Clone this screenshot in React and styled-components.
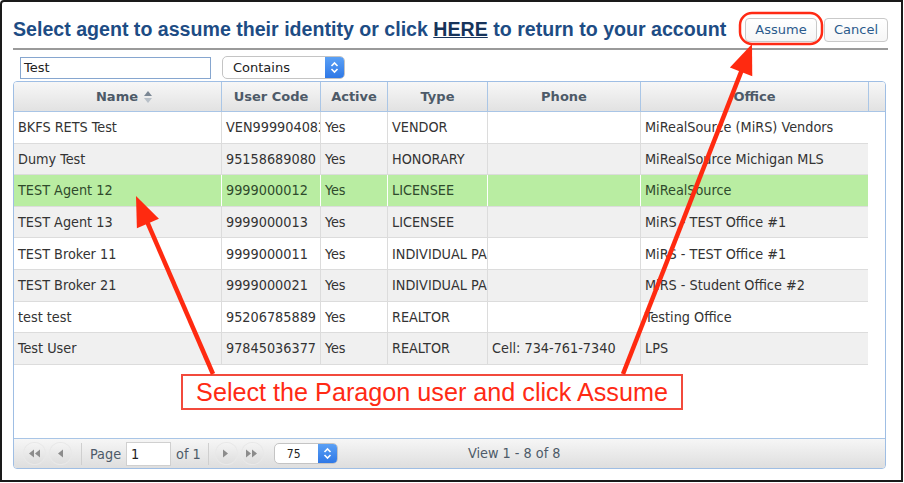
import React from 'react';
import styled, { createGlobalStyle } from 'styled-components';

const Global = createGlobalStyle`
  html, body { margin: 0; padding: 0; background: #ffffff; }
  * { box-sizing: border-box; }
`

const Frame = styled.div`
  position: relative;
  width: 903px;
  height: 482px;
  border: 2px solid #1a1a1a;
  border-radius: 4px 0 0 0;
  background: #ffffff;
  padding: 11px 13px 0 11px;
  display: flex;
  flex-direction: column;
  overflow: hidden;
`

const TitleBar = styled.div`
  display: flex;
  align-items: center;
  justify-content: space-between;
  height: 37px;
  padding-bottom: 2px;
  border-bottom: 2px solid #9a9a9a;
`

const Title = styled.h1`
  margin: 0;
  font-family: "Liberation Sans", Arial, sans-serif;
  font-weight: bold;
  font-size: 19.6px;
  color: #1d4c84;
  white-space: nowrap;

  a {
    color: #16335a;
    text-decoration: underline;
  }
`

const Buttons = styled.div`
  display: flex;
  gap: 7px;
`

const Button = styled.button`
  height: 24px;
  width: ${p => p.$w}px;
  border: 1px solid #c9c9c9;
  border-radius: 4px;
  background: linear-gradient(#ffffff, #f6f6f6);
  color: #2b5a8c;
  font-family: "DejaVu Sans", Verdana, sans-serif;
  font-size: 13px;
  padding: 0;
`

const FilterRow = styled.div`
  display: flex;
  align-items: center;
  gap: 11px;
  padding: 4px 0 0 7px;
  height: 31px;
`

const SearchInput = styled.div`
  width: 191px;
  height: 22px;
  border: 1px solid #86a6cf;
  font-family: "DejaVu Sans", Verdana, sans-serif;
  font-size: 13px;
  color: #222;
  padding: 2px 3px;
`

const Select = styled.div`
  display: flex;
  align-items: center;
  justify-content: space-between;
  width: ${p => p.$w}px;
  height: ${p => p.$h}px;
  border: 1px solid #c4c4c4;
  border-radius: 5px;
  background: #ffffff;
  font-family: "DejaVu Sans", Verdana, sans-serif;
  font-size: ${p => p.$fs}px;
  color: #222;
  padding-left: ${p => p.$pl}px;
  overflow: hidden;
`

const Stepper = styled.span`
  width: 19px;
  height: 100%;
  background: linear-gradient(#5aa0f5, #2f78e6);
  display: flex;
  align-items: center;
  justify-content: center;
`

const Grid = styled.div`
  width: 873px;
  height: 388px;
  border: 1px solid #9fbee4;
  border-radius: 4px;
  display: flex;
  flex-direction: column;
  overflow: hidden;
`

const HeadRow = styled.div`
  display: flex;
  height: 30px;
  background: linear-gradient(#f7f7f7, #e2e2e2);
  border-bottom: 1px solid #a9c5e6;
`

const HeadCell = styled.div`
  width: ${p => p.$w}px;
  flex: none;
  display: flex;
  align-items: center;
  justify-content: center;
  gap: 5px;
  padding-left: ${p => p.$pl || 0}px;
  border-right: 1px solid #aac6e6;
  font-family: "DejaVu Sans", Verdana, sans-serif;
  font-weight: bold;
  font-size: 13px;
  color: #4d5a68;
  &:last-child { border-right: none; }
`

const Body = styled.div`
  flex: 1;
  background: #ffffff;
`

const Row = styled.div`
  display: flex;
  width: 854px;
  height: 31.6px;
  border-bottom: 1px solid #dcdcdc;
  background: ${p => (p.$sel ? '#b9eda2' : p.$alt ? '#f0f0f0' : '#ffffff')};
  color: ${p => (p.$sel ? '#2f4a2c' : '#333333')};
`

const Cell = styled.div`
  width: ${p => p.$w}px;
  flex: none;
  display: flex;
  align-items: center;
  padding-left: 4px;
  white-space: nowrap;
  overflow: hidden;
  border-right: 1px solid ${p => (p.$sel ? '#ffffff' : '#dcdcdc')};
  font-family: "DejaVu Sans Condensed", "DejaVu Sans", Verdana, sans-serif;
  font-stretch: condensed;
  font-size: 14.3px;
  &:last-child { border-right: none; }
`

const Footer = styled.div`
  position: relative;
  height: 30px;
  display: flex;
  align-items: center;
  padding-left: 10px;
  border-top: 1px solid #a9c5e6;
  background: linear-gradient(#f6f6f6, #dedede);
  font-family: "DejaVu Sans Condensed", "DejaVu Sans", Verdana, sans-serif;
  font-stretch: condensed;
  font-size: 14.3px;
  color: #4d5a68;
`

const Pager = styled.div`
  display: flex;
  align-items: center;
  gap: 5px;
`

const PageBtn = styled.span`
  width: 21px;
  height: 21px;
  margin-right: ${p => p.$mr || 0}px;
  border-radius: 50%;
  background: linear-gradient(#f4f4f4, #dedede);
  box-shadow: 0 0 0 1px #e8e8e8;
  display: flex;
  align-items: center;
  justify-content: center;
`

const Sep = styled.span`
  width: 1px;
  height: 22px;
  background: #cfcfcf;
  margin: 0 ${p => p.$m}px;
`

const PageInput = styled.div`
  width: 45px;
  height: 24px;
  background: #ffffff;
  border: 1px solid #d0d0d0;
  color: #222;
  padding: 3px 4px;
`

const ViewInfo = styled.span`
  position: absolute;
  left: 454px;
  top: 6px;
`

const Overlay = styled.svg`
  position: absolute;
  left: -2px;
  top: -2px;
  width: 904px;
  height: 483px;
  pointer-events: none;
`

const Callout = styled.div`
  position: absolute;
  left: 179px;
  top: 372px;
  width: 502px;
  height: 36px;
  border: 2px solid #f24a3c;
  background: #ffffff;
  display: flex;
  align-items: center;
  justify-content: center;
  font-family: "Liberation Sans", Arial, sans-serif;
  font-size: 25.2px;
  color: #ff2a14;
`

const cols = [208, 99, 67, 100, 153, 228]

const rows = [
  ['BKFS RETS Test', 'VEN999904082', 'Yes', 'VENDOR', '', 'MiRealSource (MiRS) Vendors'],
  ['Dumy Test', '95158689080', 'Yes', 'HONORARY', '', 'MiRealSource Michigan MLS'],
  ['TEST Agent 12', '9999000012', 'Yes', 'LICENSEE', '', 'MiRealSource'],
  ['TEST Agent 13', '9999000013', 'Yes', 'LICENSEE', '', 'MiRS - TEST Office #1'],
  ['TEST Broker 11', '9999000011', 'Yes', 'INDIVIDUAL PARTNER', '', 'MiRS - TEST Office #1'],
  ['TEST Broker 21', '9999000021', 'Yes', 'INDIVIDUAL PARTNER', '', 'MiRS - Student Office #2'],
  ['test test', '95206785889', 'Yes', 'REALTOR', '', 'Testing Office'],
  ['Test User', '97845036377', 'Yes', 'REALTOR', 'Cell: 734-761-7340', 'LPS'],
]

const StepIcon = () => (
  <svg width="9" height="13" viewBox="0 0 9 13">
    <path d="M1.5 5 L4.5 2 L7.5 5 M1.5 8 L4.5 11 L7.5 8" fill="none" stroke="#fff" strokeWidth="1.6" />
  </svg>
)

const SortIcon = () => (
  <svg width="10" height="14" viewBox="0 0 10 14">
    <path d="M1 6 L5 1 L9 6 Z" fill="#7b8794" />
    <path d="M1 8 L5 13 L9 8 Z" fill="#b8c0c8" />
  </svg>
)

const Tri = ({ dir = 'right', double }) => {
  const one = dir === 'right' ? 'M0 0 L5 4 L0 8 Z' : 'M5 0 L0 4 L5 8 Z'
  return (
    <svg width={double ? 12 : 6} height="9" viewBox={`0 0 ${double ? 12 : 6} 8`}>
      <path d={one} fill="#8c8c8c" />
      {double && <path d={one} transform="translate(6 0)" fill="#8c8c8c" />}
    </svg>
  )
}

const arrowHead = (tip, tail, len, half) => {
  const dx = tip[0] - tail[0]
  const dy = tip[1] - tail[1]
  const l = Math.hypot(dx, dy)
  const ux = dx / l
  const uy = dy / l
  const bx = tip[0] - ux * len
  const by = tip[1] - uy * len
  return `${tip[0]},${tip[1]} ${bx - uy * half},${by + ux * half} ${bx + uy * half},${by - ux * half}`
}

const Arrow = ({ tip, tail }) => {
  const dx = tip[0] - tail[0]
  const dy = tip[1] - tail[1]
  const l = Math.hypot(dx, dy)
  const end = [tip[0] - (dx / l) * 20, tip[1] - (dy / l) * 20]
  return (
    <g>
      <line x1={tail[0]} y1={tail[1]} x2={end[0]} y2={end[1]} stroke="#ff2a10" strokeWidth="4.5" />
      <polygon points={arrowHead(tip, tail, 30, 12)} fill="#ff2a10" />
    </g>
  )
}

export default function App() {
  return (
    <>
      <Global />
      <Frame>
        <TitleBar>
          <Title>
            Select agent to assume their identity or click <a>HERE</a> to return to your account
          </Title>
          <Buttons>
            <Button $w={72}>Assume</Button>
            <Button $w={64}>Cancel</Button>
          </Buttons>
        </TitleBar>

        <FilterRow>
          <SearchInput>Test</SearchInput>
          <Select $w={123} $h={23} $fs={13} $pl={10}>
            Contains
            <Stepper><StepIcon /></Stepper>
          </Select>
        </FilterRow>

        <Grid>
          <HeadRow>
            <HeadCell $w={208} $pl={14}>Name <SortIcon /></HeadCell>
            <HeadCell $w={99}>User Code</HeadCell>
            <HeadCell $w={67}>Active</HeadCell>
            <HeadCell $w={100}>Type</HeadCell>
            <HeadCell $w={153}>Phone</HeadCell>
            <HeadCell $w={228}>Office</HeadCell>
            <HeadCell $w={17} />
          </HeadRow>
          <Body>
            {rows.map((r, i) => (
              <Row key={i} $alt={i % 2 === 1} $sel={i === 2}>
                {r.map((c, j) => (
                  <Cell key={j} $w={cols[j]} $sel={i === 2}>{c}</Cell>
                ))}
              </Row>
            ))}
          </Body>
          <Footer>
            <Pager>
              <PageBtn><Tri dir="left" double /></PageBtn>
              <PageBtn $mr={2}><Tri dir="left" /></PageBtn>
              <Sep $m={3} />
              <span>Page</span>
              <PageInput>1</PageInput>
              <span>of 1</span>
              <Sep $m={2} />
              <PageBtn><Tri /></PageBtn>
              <PageBtn $mr={6}><Tri double /></PageBtn>
              <Select $w={64} $h={21} $fs={12} $pl={12}>
                75
                <Stepper><StepIcon /></Stepper>
              </Select>
            </Pager>
            <ViewInfo>View 1 - 8 of 8</ViewInfo>
          </Footer>
        </Grid>

        <Callout>Select the Paragon user and click Assume</Callout>
        <Overlay viewBox="0 0 904 483">
          <rect x="740" y="13" width="82" height="31" rx="12" fill="none" stroke="#ff2a14" strokeWidth="2.5" />
          <Arrow tip={[136, 196]} tail={[213, 374]} />
          <Arrow tip={[752, 44]} tail={[623, 374]} />
        </Overlay>
      </Frame>
    </>
  )
}
